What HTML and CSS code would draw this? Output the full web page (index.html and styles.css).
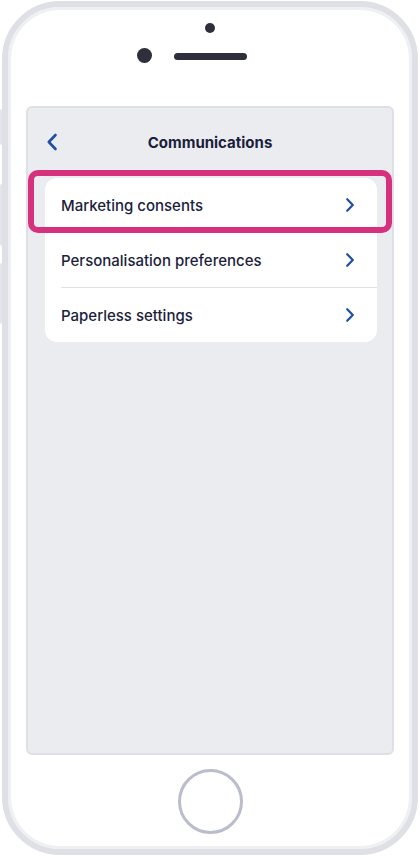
FILE: index.html
```html
<!DOCTYPE html>
<html lang="en">
<head>
<meta charset="utf-8">
<title>Communications</title>
<link rel="stylesheet" href="styles.css">
</head>
<body>
<div class="device">
  <span class="side-btn side-btn-1"></span>
  <span class="side-btn side-btn-2"></span>
  <span class="side-btn side-btn-3"></span>
  <div class="phone">
    <div class="top">
      <span class="sensor"></span>
      <div class="ear-row">
        <span class="camera"></span>
        <span class="speaker"></span>
        <span></span>
      </div>
    </div>
    <div class="screen">
      <header class="header">
        <button class="back" aria-label="Back">
          <svg width="12" height="18" viewBox="0 0 12 18"><path d="M9.5 2 L2.8 9 L9.5 16" fill="none" stroke="#1e4fa3" stroke-width="2.6" stroke-linecap="round" stroke-linejoin="round"/></svg>
        </button>
        <h1 class="title">Communications</h1>
        <span></span>
      </header>
      <ul class="card">
        <li class="row"><span class="label">Marketing consents</span><svg class="chev" width="10" height="16" viewBox="0 0 10 16"><path d="M2.2 2.2 L7.8 8 L2.2 13.8" fill="none" stroke="#1e4fa3" stroke-width="2.2" stroke-linecap="round" stroke-linejoin="round"/></svg></li>
        <li class="row"><span class="label">Personalisation preferences</span><svg class="chev" width="10" height="16" viewBox="0 0 10 16"><path d="M2.2 2.2 L7.8 8 L2.2 13.8" fill="none" stroke="#1e4fa3" stroke-width="2.2" stroke-linecap="round" stroke-linejoin="round"/></svg></li>
        <li class="row"><span class="label">Paperless settings</span><svg class="chev" width="10" height="16" viewBox="0 0 10 16"><path d="M2.2 2.2 L7.8 8 L2.2 13.8" fill="none" stroke="#1e4fa3" stroke-width="2.2" stroke-linecap="round" stroke-linejoin="round"/></svg></li>
      </ul>
      <div class="highlight"></div>
    </div>
    <div class="home"></div>
  </div>
</div>
</body>
</html>
```

FILE: styles.css
```css
* { box-sizing: border-box; }
html, body { margin: 0; padding: 0; background: #fff; }
body { width: 420px; height: 856px; overflow: hidden; font-family: "Inter", "Noto Sans", sans-serif; }

.device { position: relative; width: 420px; height: 856px; }

.side-btn { position: absolute; left: 0; width: 4px; background: #e4e5ea; border-radius: 2px 0 0 2px; }
.side-btn-1 { top: 108px; height: 36px; }
.side-btn-2 { top: 183px; height: 62px; }
.side-btn-3 { top: 262px; height: 61px; }

.phone {
  margin: 1px 2px 0;
  width: 416px;
  height: 854px;
  border: 6px solid #dfe0e6;
  border-radius: 58px;
  box-shadow: inset 0 0 0 3px #eef0f3;
  background: #fff;
  display: flex;
  flex-direction: column;
  align-items: center;
  position: relative;
  z-index: 1;
}

.top { height: 99px; width: 100%; display: flex; flex-direction: column; align-items: center; }
.sensor { margin-top: 16px; width: 10px; height: 10px; border-radius: 50%; background: #2d2f3a; }
.ear-row { margin-top: 15px; width: 100%; display: grid; grid-template-columns: 1fr auto 1fr; align-items: center; }
.camera { justify-self: end; margin-right: 22px; width: 15px; height: 15px; border-radius: 50%; background: #2d2f3a; }
.speaker { width: 73px; height: 7px; border-radius: 4px; background: #2d2f3a; margin-top: 1px; }

.screen {
  position: relative;
  width: 368px;
  height: 649px;
  border: 2px solid #dfe0e6;
  border-radius: 6px;
  background: #ebecf0;
}

.header { height: 68px; display: grid; grid-template-columns: 1fr auto 1fr; align-items: center; }
.back { justify-self: start; margin-left: 18px; padding: 0; border: 0; background: none; display: flex; }
.title { margin: 0; font-size: 15px; font-weight: 700; color: #1b1e3c; letter-spacing: 0; }

.card {
  list-style: none;
  margin: 2px 15px 0 17px;
  padding: 0;
  background: #fff;
  border-radius: 12px;
}
.row {
  height: 54px;
  display: flex;
  align-items: center;
  justify-content: space-between;
  padding: 0 22px 0 16px;
  position: relative;
}
.row + .row { height: 55px; border-top: 1px solid #dfe1e7; margin-left: 16px; padding-left: 0; }
.label { font-size: 15px; font-weight: 500; color: #1b1e3c; }
.chev { display: block; }

.highlight {
  position: absolute;
  left: 0;
  top: 62px;
  width: 364px;
  height: 63px;
  border: 6.5px solid #d5317d;
  border-radius: 10px;
}

.home { margin-top: 14px; width: 65px; height: 65px; border-radius: 50%; border: 3px solid #b9bdcc; }
```
